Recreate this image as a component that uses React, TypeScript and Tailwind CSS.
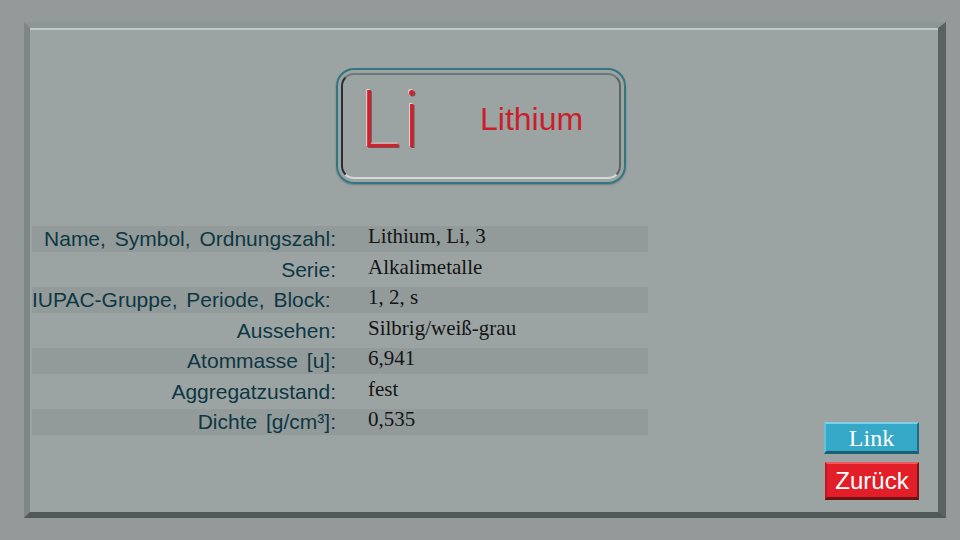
const rows: { label: string; value: React.ReactNode; pr?: string }[] = [
  { label: 'Name, Symbol, Ordnungszahl:', value: 'Lithium, Li, 3' },
  { label: 'Serie:', value: 'Alkalimetalle' },
  { label: 'IUPAC-Gruppe, Periode, Block:', value: '1, 2, s', pr: 'pr-[8px]' },
  { label: 'Aussehen:', value: 'Silbrig/weiß-grau' },
  { label: 'Atommasse [u]:', value: '6,941' },
  { label: 'Aggregatzustand:', value: 'fest' },
  { label: 'Dichte [g/cm³]:', value: '0,535' },
]

export default function App() {
  return (
    <div className="w-[960px] h-[540px] overflow-hidden bg-[#939a99] pt-[22px] pl-[24px]">
      {/* Beveled panel */}
      <div className="w-[922px] h-[496px] bg-[#9ca4a3] border-l-[6px] border-t-[6px] border-r-[8px] border-b-[6px] border-l-[#7f8786] border-t-[#8e9695] border-r-[#5a6161] border-b-[#525959]">
        <div className="flex h-full border-t-2 border-t-[#c2cac9]">
          {/* Left column: element box + table */}
          <div className="w-[618px] flex flex-col">
            {/* Element box */}
            <div className="ml-[306px] mt-[38px] w-[290px] h-[116px] rounded-[18px] border-2 border-[#2f7882] p-[3px] shadow-[0_1px_2px_rgba(0,0,0,0.25)]">
              <div className="h-full rounded-[13px] border-2 border-l-[#2b2f2f] border-t-[#707776] border-r-[#5d6464] border-b-[#d3d9d8] flex items-start">
                <span
                  className="ml-[16px] mt-[5px] w-[121px] text-[78px] leading-none font-extralight text-[#d41f2c]"
                  style={{
                    fontFamily: 'Inter, "Liberation Sans", sans-serif',
                    textShadow: '-1px -1px 0 rgba(255,255,255,0.55), 1px 1px 0 rgba(60,20,20,0.55)',
                  }}
                >
                  Li
                </span>
                <span
                  className="mt-[28px] text-[32px] leading-none text-[#c81f2b]"
                  style={{ fontFamily: '"Liberation Sans", Arial, sans-serif' }}
                >
                  Lithium
                </span>
              </div>
            </div>

            {/* Data table */}
            <div className="ml-[2px] mt-[40px] w-[616px] flex flex-col">
              {rows.map((row, i) => (
                <div
                  key={row.label}
                  className={
                    i % 2 === 0
                      ? 'h-[30.5px] flex items-start border-t-[2px] border-b-[3px] border-transparent bg-clip-padding bg-[#939b9a]'
                      : 'h-[30.5px] flex items-start border-t-[2px] border-b-[3px] border-transparent'
                  }
                >
                  <div
                    className={`w-[304px] shrink-0 text-right text-[21px] leading-[24px] mt-[1px] text-[#0d3743] whitespace-nowrap ${row.pr ?? ''}`}
                    style={{ fontFamily: '"Liberation Sans", Arial, sans-serif', wordSpacing: '3px' }}
                  >
                    {row.label}
                  </div>
                  <div
                    className="pl-[32px] text-[21px] leading-[24px] -mt-[2px] text-[#141414] whitespace-nowrap"
                    style={{ fontFamily: '"Liberation Serif", "Times New Roman", serif' }}
                  >
                    {row.value}
                  </div>
                </div>
              ))}
            </div>
          </div>

          {/* Right column: buttons */}
          <div className="flex-1 flex flex-col justify-end items-end gap-[8px] pb-[12px] pr-[19px]">
            <button
              className="w-[95px] h-[32px] bg-[#36a9c9] border-t-2 border-l-2 border-r-2 border-b-[3px] border-t-[#7ccfe6] border-l-[#62c1dc] border-r-[#1f6f86] border-b-[#1b5f74] text-white text-[24px] leading-none flex items-center justify-center"
              style={{ fontFamily: '"Liberation Serif", "Times New Roman", serif' }}
            >
              Link
            </button>
            <button
              className="w-[94px] h-[38px] bg-[#e21e28] border-t-2 border-l-2 border-r-2 border-b-[3px] border-t-[#ee5a60] border-l-[#b81a22] border-r-[#7e1418] border-b-[#6e1216] text-white text-[24px] leading-none flex items-center justify-center"
              style={{ fontFamily: '"Liberation Sans", Arial, sans-serif' }}
            >
              Zurück
            </button>
          </div>
        </div>
      </div>
    </div>
  )
}
